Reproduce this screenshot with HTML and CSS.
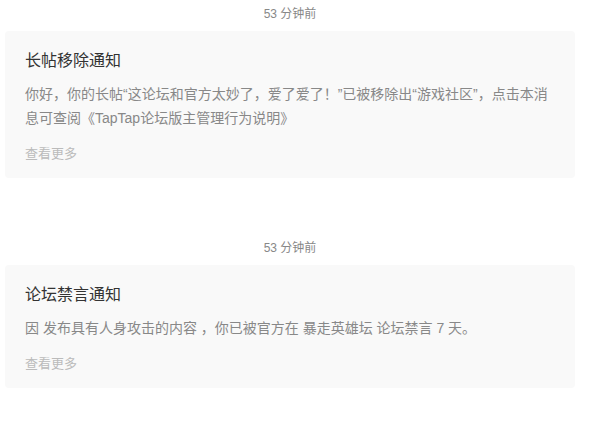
FILE: index.html
```html
<!DOCTYPE html>
<html lang="zh-CN">
<head>
    <meta charset="UTF-8">
    <meta name="viewport" content="width=device-width, initial-scale=1.0">
    <title>消息通知</title>
    <link rel="stylesheet" href="styles.css">
</head>
<body>
    <div class="notice-list">
        <div class="notice">
            <div class="notice-time">53 分钟前</div>
            <div class="notice-card">
                <div class="notice-title">长帖移除通知</div>
                <div class="notice-text">你好，你的长帖“这论坛和官方太妙了，爱了爱了！”已被移除出“游戏社区”，点击本消息可查阅《TapTap论坛版主管理行为说明》</div>
                <a class="notice-more" href="#">查看更多</a>
            </div>
        </div>

        <div class="notice">
            <div class="notice-time">53 分钟前</div>
            <div class="notice-card">
                <div class="notice-title">论坛禁言通知</div>
                <div class="notice-text">因 发布具有人身攻击的内容 ，你已被官方在 暴走英雄坛 论坛禁言 7 天。</div>
                <a class="notice-more" href="#">查看更多</a>
            </div>
        </div>
    </div>
</body>
</html>
```

FILE: styles.css
```css
body {
    margin: 0;
    background-color: #fff;
    font-family: "Liberation Sans", "Noto Sans CJK SC", sans-serif;
    text-spacing-trim: space-all;
}

.notice-list {
    width: 570px;
    padding: 4px 0 0 5px;
    display: flex;
    flex-direction: column;
    gap: 60px;
}

.notice-time {
    text-align: center;
    font-size: 12px;
    line-height: 20px;
    color: #888;
    margin-bottom: 7px;
}

.notice-card {
    background-color: #f9f9f9;
    border-radius: 4px;
    padding: 18px 20px 14px;
}

.notice-title {
    font-size: 16px;
    line-height: 24px;
    color: #333;
}

.notice-text {
    margin-top: 9px;
    font-size: 14px;
    line-height: 24px;
    color: #888;
}

.notice-more {
    display: block;
    margin-top: 14px;
    font-size: 13px;
    line-height: 20px;
    color: #bbb;
    text-decoration: none;
}
```
